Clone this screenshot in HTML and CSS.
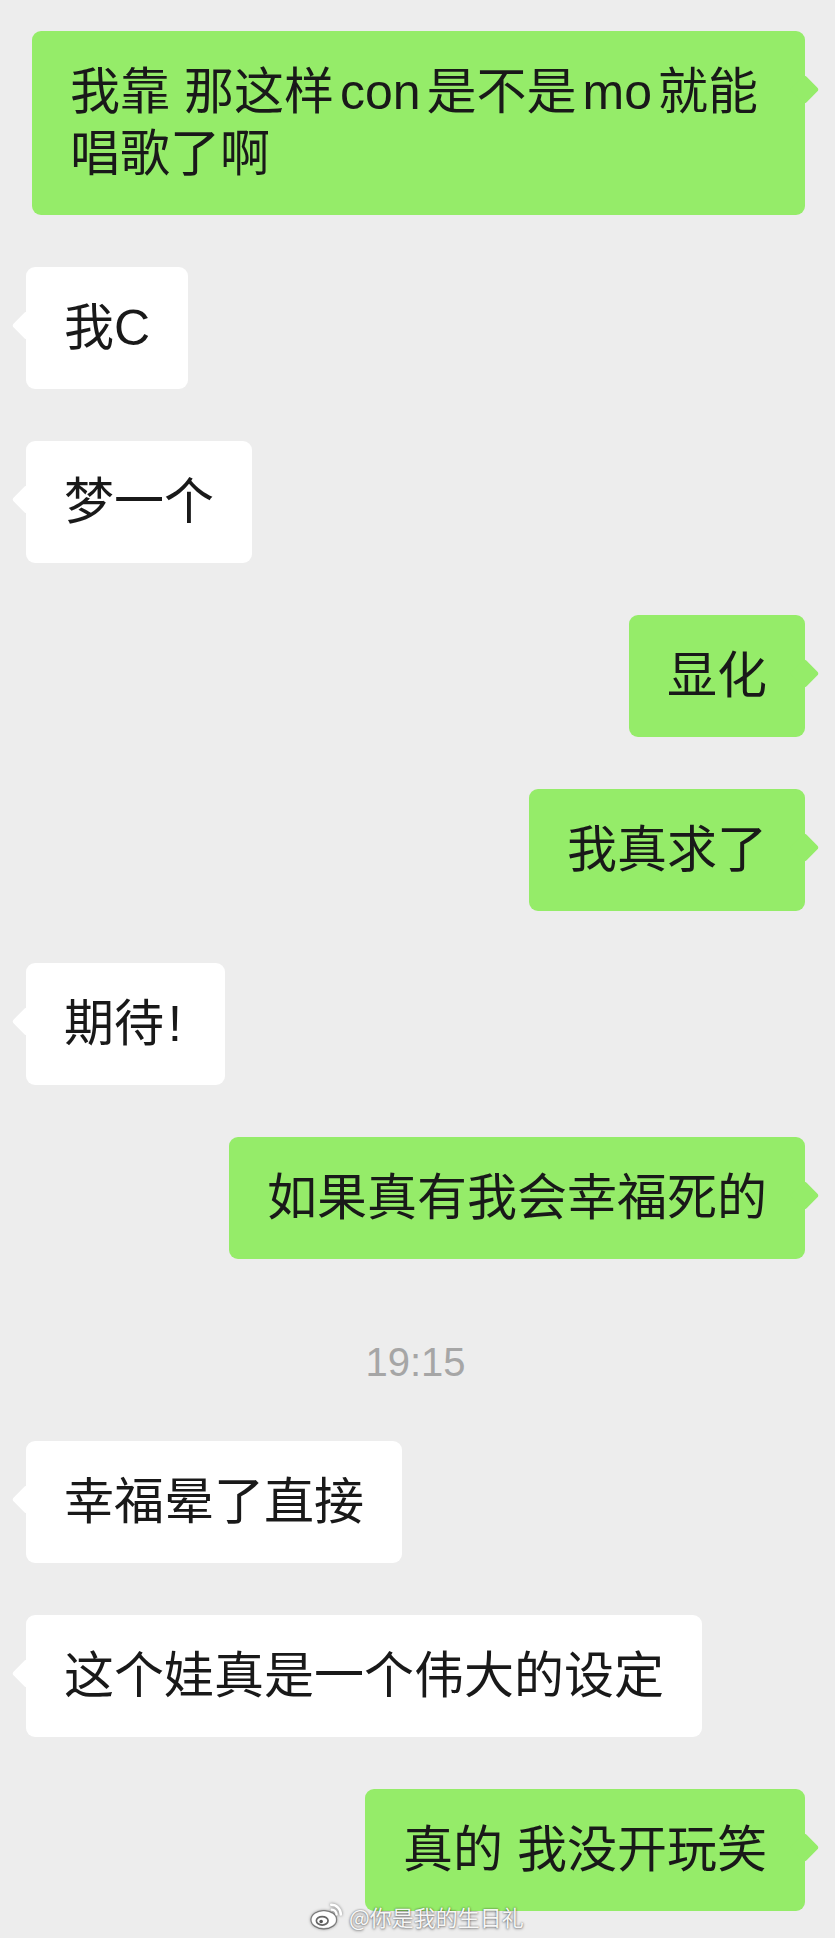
FILE: index.html
```html
<!DOCTYPE html>
<html lang="zh-CN">
<head>
    <meta charset="UTF-8">
    <title>聊天记录</title>
    <link rel="stylesheet" href="styles.css">
</head>
<body>
<div class="chat">
    <div class="msg me">
        <div class="bubble">我靠 那这样<span class="latin">con</span>是不是<span class="latin">mo</span>就能唱歌了啊</div>
    </div>
    <div class="msg them">
        <div class="bubble">我C</div>
    </div>
    <div class="msg them">
        <div class="bubble">梦一个</div>
    </div>
    <div class="msg me">
        <div class="bubble">显化</div>
    </div>
    <div class="msg me">
        <div class="bubble">我真求了</div>
    </div>
    <div class="msg them">
        <div class="bubble">期待<span class="bang">!</span></div>
    </div>
    <div class="msg me">
        <div class="bubble">如果真有我会幸福死的</div>
    </div>

    <div class="time">19:15</div>

    <div class="msg them">
        <div class="bubble">幸福晕了直接</div>
    </div>
    <div class="msg them">
        <div class="bubble">这个娃真是一个伟大的设定</div>
    </div>
    <div class="msg me">
        <div class="bubble">真的 我没开玩笑</div>
    </div>

    <div class="watermark">
        <svg class="weibo" width="34" height="28" viewBox="0 0 32 26">
            <ellipse cx="13" cy="16.5" rx="12" ry="8.5" fill="#fff" stroke="rgba(0,0,0,0.4)" stroke-width="1.2"/>
            <ellipse cx="11.5" cy="17.5" rx="5.5" ry="4" fill="none" stroke="#666" stroke-width="1.6"/>
            <circle cx="10.5" cy="18.2" r="1.7" fill="#555"/>
            <path d="M20 2.5 a9 9 0 0 1 9 9" fill="none" stroke="#fff" stroke-width="2.4" stroke-linecap="round"/>
            <path d="M20.5 7 a4.5 4.5 0 0 1 4.5 4.5" fill="none" stroke="#fff" stroke-width="2.2" stroke-linecap="round"/>
        </svg>
        <span>@你是我的生日礼</span>
    </div>
</div>
</body>
</html>
```

FILE: styles.css
```css
* {
    box-sizing: border-box;
}

html, body {
    margin: 0;
    padding: 0;
    background: #ededed;
}

body {
    font-family: "Liberation Sans", "Noto Sans CJK SC", sans-serif;
    color: #191919;
}

.chat {
    position: relative;
    min-height: 1938px;
    display: flex;
    flex-direction: column;
    gap: 52px;
    padding: 31px 30px 26px 26px;
}

.msg {
    display: flex;
}

.msg.me {
    justify-content: flex-end;
}

.bubble {
    position: relative;
    max-width: 773px;
    padding: 30px 38px;
    font-size: 50px;
    line-height: 62px;
    border-radius: 9px;
    background: #fff;
}

.msg.me .bubble {
    background: #95ec69;
}

/* little arrow pointing at the speaker */
.bubble::after {
    content: "";
    position: absolute;
    top: 48px;
    width: 21px;
    height: 21px;
    border-radius: 3px;
    background: inherit;
    transform: rotate(45deg);
}

.msg.them .bubble::after {
    left: -10px;
}

.msg.me .bubble::after {
    right: -10px;
}

.latin {
    padding: 0 6px;
}

.bang {
    padding: 0 5px 0 4px;
}

.time {
    text-align: center;
    font-size: 40px;
    line-height: 48px;
    color: #a6a6a6;
    padding: 27px 0 3px;
}

.watermark {
    position: absolute;
    left: 310px;
    bottom: 8px;
    display: flex;
    align-items: center;
    gap: 5px;
    font-family: "Noto Sans CJK SC", sans-serif;
    font-size: 22px;
    line-height: 28px;
    color: rgba(255, 255, 255, 0.95);
    text-shadow: 0 0 2px rgba(0, 0, 0, 0.55), 0 1px 3px rgba(0, 0, 0, 0.35);
}

.weibo {
    filter: drop-shadow(0 0 1.5px rgba(0, 0, 0, 0.5));
}
```
